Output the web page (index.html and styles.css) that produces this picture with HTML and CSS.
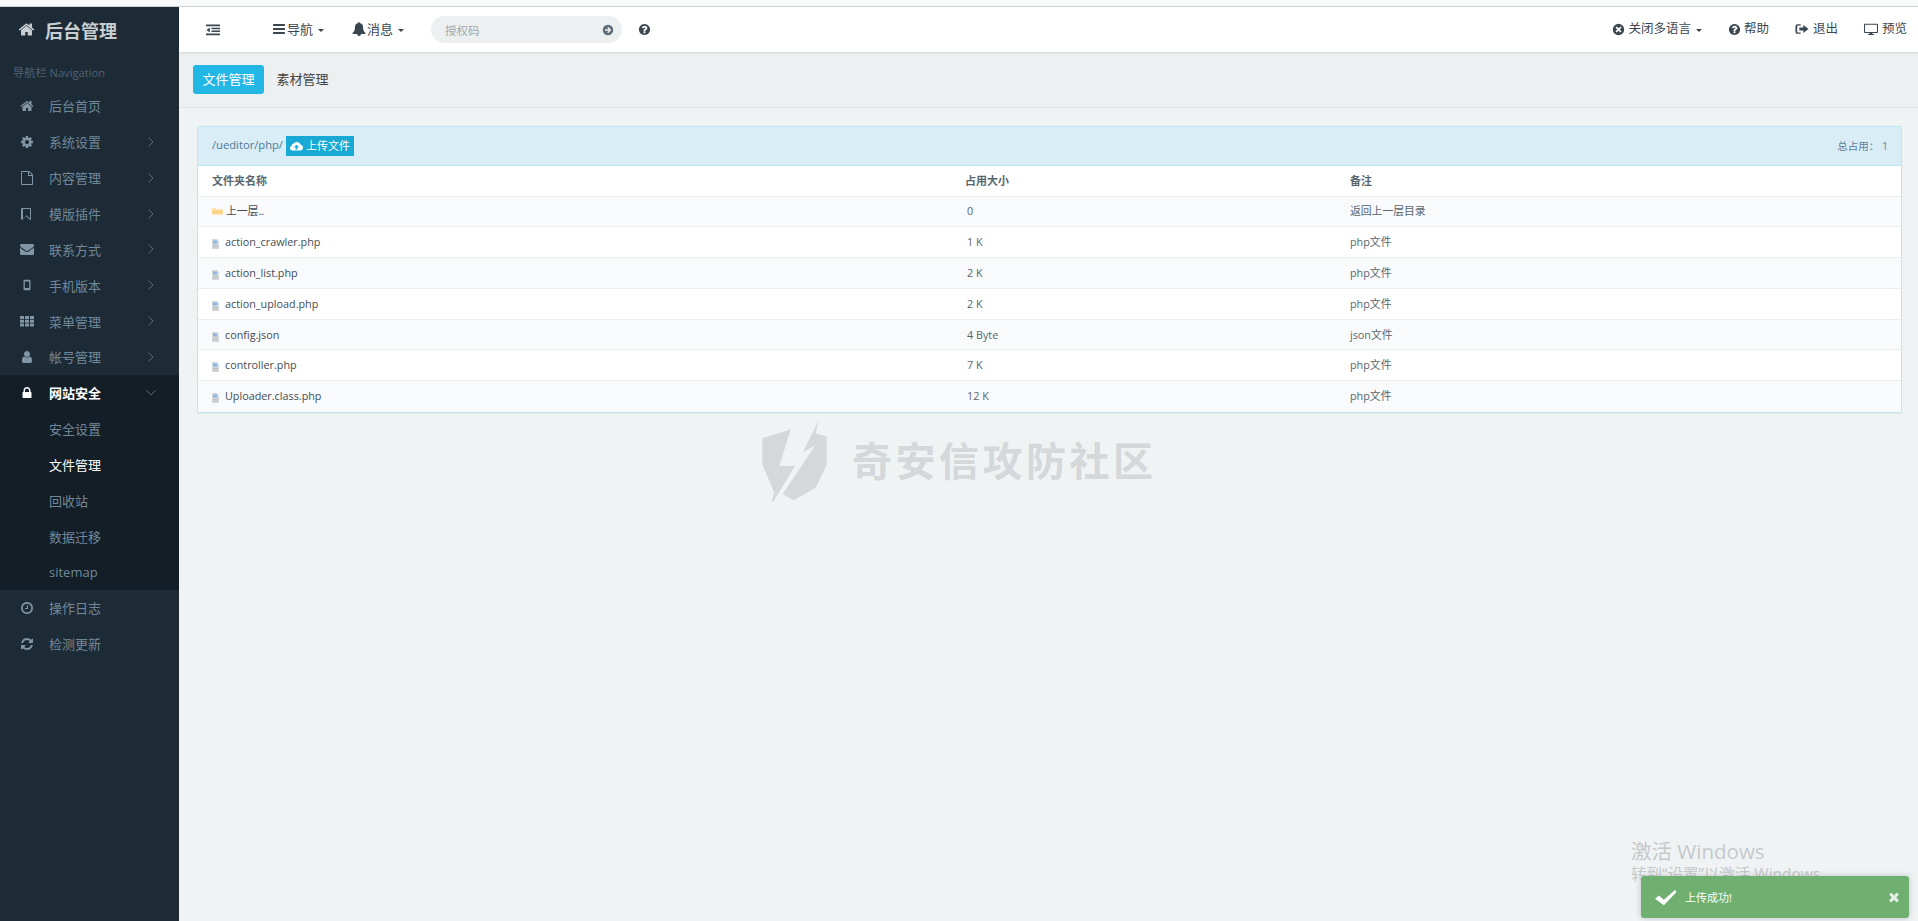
FILE: index.html
```html
<!DOCTYPE html>
<html lang="zh-CN">
<head>
  <meta charset="UTF-8">
  <title>文件管理</title>
  <link rel="stylesheet" href="styles.css">
</head>
<body>
  <svg class="sprite" xmlns="http://www.w3.org/2000/svg">
    <symbol id="i-home" viewBox="0 0 1792 1792"><path d="M1472 992v480q0 26-19 45t-45 19h-384v-384h-256v384h-384q-26 0-45-19t-19-45v-480q0-1 .5-3t.5-3l575-474 575 474q1 2 1 6zm223-69l-62 74q-8 9-21 11h-3q-13 0-21-7l-692-577-692 577q-12 8-24 7-13-2-21-11l-62-74q-8-10-7-23.500t11-21.500l719-599q32-26 76-26t76 26l244 204v-195q0-14 9-23t23-9h192q14 0 23 9t9 23v408l219 182q10 8 11 21.500t-7 23.500z"/></symbol>
    <symbol id="i-cog" viewBox="0 0 1792 1792"><path d="M1152 896q0-106-75-181t-181-75-181 75-75 181 75 181 181 75 181-75 75-181zm512-109v222q0 12-8 23t-20 13l-185 28q-19 54-39 91 35 50 107 138 10 12 10 25t-9 23q-27 37-99 108t-94 71q-12 0-26-9l-138-108q-44 23-91 38-16 136-29 186-7 28-36 28h-222q-14 0-24.500-8.500t-11.500-21.500l-28-184q-49-16-90-37l-141 107q-10 9-25 9-14 0-25-11-126-114-165-168-7-10-7-23 0-12 8-23 15-21 51-66.500t54-70.500q-27-50-41-99l-183-27q-13-2-21-12.500t-8-23.500v-222q0-12 8-23t19-13l186-28q14-46 39-92-40-57-107-138-10-12-10-24 0-10 9-23 26-36 98.500-107.500t94.500-71.500q13 0 26 10l138 107q44-23 91-38 16-136 29-186 7-28 36-28h222q14 0 24.500 8.500t11.500 21.500l28 184q49 16 90 37l142-107q9-9 24-9 13 0 25 10 129 119 165 170 7 8 7 22 0 12-8 23-15 21-51 66.500t-54 70.500q26 50 41 98l183 28q13 2 21 12.500t8 23.500z"/></symbol>
    <symbol id="i-file" viewBox="0 0 1792 1792"><path d="M1596 380q28 28 48 76t20 88v1152q0 40-28 68t-68 28h-1344q-40 0-68-28t-28-68v-1600q0-40 28-68t68-28h896q40 0 88 20t76 48zm-444-244v376h376q-10-29-22-41l-313-313q-12-12-41-22zm384 1528v-1024h-416q-40 0-68-28t-28-68v-416h-768v1536h1280z"/></symbol>
    <symbol id="i-bookmark" viewBox="0 0 1792 1792"><path d="M1280 256h-896v1242l448-430 448 430v-1242zm12-128q23 0 44 9 33 13 52.500 41t19.500 62v1289q0 34-19.500 62t-52.500 41q-19 8-44 8-48 0-83-32l-441-424-441 424q-36 33-83 33-23 0-44-9-33-13-52.500-41t-19.500-62v-1289q0-34 19.500-62t52.500-41q21-9 44-9h1048z"/></symbol>
    <symbol id="i-envelope" viewBox="0 0 1792 1792"><path d="M1792 710v794q0 66-47 113t-113 47h-1472q-66 0-113-47t-47-113v-794q44 49 101 87 362 246 497 345 57 42 92.500 65.500t94.500 48 110 24.500h2q51 0 110-24.500t94.500-48 92.500-65.500q170-123 498-345 57-39 100-87zm0-294q0 79-49 151t-122 123q-376 261-468 325-10 7-42.500 30.500t-54 38-52 32.500-57.500 27-50 9h-2q-23 0-50-9t-57.500-27-52-32.500-54-38-42.500-30.500q-91-64-262-182.500t-205-142.500q-62-42-117-115.500t-55-136.500q0-78 41.500-130t118.500-52h1472q65 0 112.500 47t47.500 113z"/></symbol>
    <symbol id="i-mobile" viewBox="0 0 16 16"><path fill-rule="evenodd" d="M5.500 2h5q1.500 0 1.500 1.500v9q0 1.500-1.500 1.500h-5q-1.500 0-1.500-1.500v-9q0-1.500 1.500-1.500zm0 2v7.500h5v-7.500z"/></symbol>
    <symbol id="i-th" viewBox="0 0 14 14"><path d="M0 2h4v3h-4zM5 2h4v3h-4zM10 2h4v3h-4zM0 5.800h4v3h-4zM5 5.800h4v3h-4zM10 5.800h4v3h-4zM0 9.600h4v3h-4zM5 9.600h4v3h-4zM10 9.600h4v3h-4z"/></symbol>
    <symbol id="i-user" viewBox="0 0 1792 1792"><path d="M1536 1399q0 109-62.500 187t-150.500 78h-854q-88 0-150.500-78t-62.500-187q0-85 8.500-160.500t31.500-152 58.500-131 94-89 134.500-34.500q131 128 313 128t313-128q76 0 134.500 34.500t94 89 58.500 131 31.500 152 8.500 160.500zm-256-887q0 159-112.500 271.500t-271.500 112.500-271.500-112.500-112.500-271.500 112.500-271.500 271.500-112.500 271.500 112.500 112.500 271.500z"/></symbol>
    <symbol id="i-lock" viewBox="0 0 1792 1792"><path d="M640 768h512v-192q0-106-75-181t-181-75-181 75-75 181v192zm832 96v576q0 40-28 68t-68 28h-960q-40 0-68-28t-28-68v-576q0-40 28-68t68-28h32v-192q0-184 132-316t316-132 316 132 132 316v192h32q40 0 68 28t28 68z"/></symbol>
    <symbol id="i-clock" viewBox="0 0 1792 1792"><path d="M1024 544v448q0 14-9 23t-23 9h-320q-14 0-23-9t-9-23v-64q0-14 9-23t23-9h224v-352q0-14 9-23t23-9h64q14 0 23 9t9 23zm416 352q0-148-73-273t-198-198-273-73-273 73-198 198-73 273 73 273 198 198 273 73 273-73 198-198 73-273zm224 0q0 209-103 385.500t-279.500 279.500-385.500 103-385.500-103-279.500-279.500-103-385.500 103-385.500 279.500-279.500 385.500-103 385.500 103 279.500 279.500 103 385.500z"/></symbol>
    <symbol id="i-refresh" viewBox="0 0 1792 1792"><path d="M1639 1056q0 5-1 7-64 268-268 434.500t-478 166.500q-146 0-282.500-55t-243.500-157l-129 129q-19 19-45 19t-45-19-19-45v-448q0-26 19-45t45-19h448q26 0 45 19t19 45-19 45l-137 137q71 66 161 102t187 36q134 0 250-65t186-179q11-17 53-117 8-23 30-23h192q13 0 22.500 9.500t9.500 22.500zm25-800v448q0 26-19 45t-45 19h-448q-26 0-45-19t-19-45 19-45l138-138q-148-137-349-137-134 0-250 65t-186 179q-11 17-53 117-8 23-30 23h-199q-13 0-22.500-9.500t-9.500-22.500v-7q65-268 270-434.500t480-166.500q146 0 284 55.500t245 156.500l130-129q19-19 45-19t45 19 19 45z"/></symbol>
    <symbol id="i-bars" viewBox="0 0 1792 1792"><path d="M1664 1344v128q0 26-19 45t-45 19h-1408q-26 0-45-19t-19-45v-128q0-26 19-45t45-19h1408q26 0 45 19t19 45zm0-512v128q0 26-19 45t-45 19h-1408q-26 0-45-19t-19-45v-128q0-26 19-45t45-19h1408q26 0 45 19t19 45zm0-512v128q0 26-19 45t-45 19h-1408q-26 0-45-19t-19-45v-128q0-26 19-45t45-19h1408q26 0 45 19t19 45z"/></symbol>
    <symbol id="i-bell" viewBox="0 0 1792 1792"><path d="M912 1696q0-16-16-16-59 0-101.500-42.500t-42.500-101.500q0-16-16-16t-16 16q0 73 51.500 124.500t124.500 51.500q16 0 16-16zm816-288q0 52-38 90t-90 38h-448q0 106-75 181t-181 75-181-75-75-181h-448q-52 0-90-38t-38-90q50-42 91-88t85-119.500 74.500-158.500 50-206 19.500-260q0-152 117-282.500t307-158.500q-8-19-8-39 0-40 28-68t68-28 68 28 28 68q0 20-8 39 190 28 307 158.500t117 282.500q0 139 19.500 260t50 206 74.500 158.500 85 119.500 91 88z"/></symbol>
    <symbol id="i-question" viewBox="0 0 1792 1792"><path d="M1024 1376v-192q0-14-9-23t-23-9h-192q-14 0-23 9t-9 23v192q0 14 9 23t23 9h192q14 0 23-9t9-23zm256-672q0-88-55.500-163t-138.500-116-170-41q-243 0-371 213-15 24 8 42l132 100q7 6 19 6 16 0 25-12 53-68 86-92 34-24 86-24 48 0 85.500 26t37.500 59q0 38-20 61t-68 45q-63 28-115.500 86.500t-52.500 125.500v36q0 14 9 23t23 9h192q14 0 23-9t9-23q0-19 21.500-49.500t54.500-49.500q32-18 49-28.500t46-35 44.500-48 28-60.500 12.500-81zm384 192q0 209-103 385.500t-279.500 279.500-385.500 103-385.500-103-279.500-279.500-103-385.500 103-385.500 279.500-279.500 385.500-103 385.500 103 279.500 279.500 103 385.500z"/></symbol>
    <symbol id="i-check" viewBox="0 0 70 52"><path d="M3 30l12-10 15 13 35-31 3 8-38 40z"/></symbol>
    <symbol id="i-times" viewBox="0 0 1792 1792"><path d="M1490 1322q0 40-28 68l-136 136q-28 28-68 28t-68-28l-294-294-294 294q-28 28-68 28t-68-28l-136-136q-28-28-28-68t28-68l294-294-294-294q-28-28-28-68t28-68l136-136q28-28 68-28t68 28l294 294 294-294q28-28 68-28t68 28l136 136q28 28 28 68t-28 68l-294 294 294 294q28 28 28 68z"/></symbol>
    <symbol id="i-arrow-circle" viewBox="0 0 16 16"><path fill-rule="evenodd" d="M8 1a7 7 0 1 1 0 14a7 7 0 0 1 0-14zM8.300 3.800l-1.300 1.300l1.900 1.800h-4.900v2.200h4.900l-1.900 1.800l1.300 1.300l4.200-4.200z"/></symbol>
    <symbol id="i-times-circle" viewBox="0 0 16 16"><path fill-rule="evenodd" d="M8 1a7 7 0 1 1 0 14a7 7 0 0 1 0-14zM5.700 4.300l-1.400 1.400l2.300 2.300l-2.300 2.300l1.400 1.400l2.300-2.300l2.300 2.300l1.400-1.400l-2.300-2.300l2.300-2.300l-1.400-1.400l-2.300 2.300z"/></symbol>
    <symbol id="i-signout" viewBox="0 0 16 16"><path fill-rule="evenodd" d="M3 2.500h3.500v1.500h-3q-1 0-1 1v6q0 1 1 1h3v1.500h-3.500q-2.500 0-2.500-2.500v-6q0-2.500 2.500-2.500zM9.500 3.500l6 4.500l-6 4.500v-2.800h-4.500v-3.400h4.500z"/></symbol>
    <symbol id="i-desktop" viewBox="0 0 16 16"><path fill-rule="evenodd" d="M1 2h14q1 0 1 1v8.500q0 1-1 1h-5.500v1.300h2v1h-7v-1h2v-1.300h-5.500q-1 0-1-1v-8.500q0-1 1-1zm.2 1.200v8.100h13.600v-8.100z"/></symbol>
    <symbol id="i-cloud" viewBox="0 0 18 14"><path fill-rule="evenodd" d="M10 1q3.500 0 4.500 3.300q3.500 .7 3.500 4.200q0 4-4 4h-10.500q-3.500 0-3.500-3.500q0-2.700 2.500-3.500q0-2.500 2.700-2.500q1.500-2.500 4.800-2.500zM9 4.500l-3.700 3.700h2.400v3h2.600v-3h2.400z"/></symbol>
    <symbol id="i-indent" viewBox="0 0 14 14"><path d="M0 1.500h14v1.800h-14zM5.500 4.800h8.500v1.400h-8.500zM5.500 7.600h8.500v1.400h-8.500zM0 10.500h14v1.800h-14zM3.800 4.500v5l-3.300-2.500z"/></symbol>
    <symbol id="i-chevron-r" viewBox="0 0 8 12"><path d="M1.500 1.500l4.500 4.500l-4.500 4.500" fill="none" stroke="currentColor" stroke-width="1"/></symbol>
    <symbol id="i-chevron-d" viewBox="0 0 12 8"><path d="M1.500 1.500l4.500 4.500l4.500-4.500" fill="none" stroke="currentColor" stroke-width="1"/></symbol>
    <symbol id="i-doc" viewBox="0 0 7 10"><path fill="#d5d8db" d="M0 0h5l2 2v8h-7z"/><path fill="#8fb6e0" d="M1 1.500h4v3h-4z"/><path fill="#b4b9bd" d="M1 6h5v.8h-5zM1 7.800h5v.8h-5z"/></symbol>
    <symbol id="i-folder" viewBox="0 0 12 7"><path fill="#fbdc9c" d="M0 0h4l1 1h7v6h-12z"/><path fill="#f6c777" d="M1.500 3h1.500v2h-1.500zM4 3h1.500v2h-1.500zM6.500 3h1.500v2h-1.500zM9 3h1.500v2h-1.500z"/></symbol>
  </svg>

  <div class="top-strip"></div>
  <div class="app">
    <aside class="sidebar">
      <div class="brand">
        <svg class="brand-icon"><use href="#i-home"/></svg>
        <span>后台管理</span>
      </div>
      <div class="nav-label">导航栏 Navigation</div>
      <ul class="nav">
        <li class="nav-item"><svg class="nav-icon"><use href="#i-home"/></svg><span>后台首页</span></li>
        <li class="nav-item"><svg class="nav-icon"><use href="#i-cog"/></svg><span>系统设置</span><svg class="chevron"><use href="#i-chevron-r"/></svg></li>
        <li class="nav-item"><svg class="nav-icon"><use href="#i-file"/></svg><span>内容管理</span><svg class="chevron"><use href="#i-chevron-r"/></svg></li>
        <li class="nav-item"><svg class="nav-icon"><use href="#i-bookmark"/></svg><span>模版插件</span><svg class="chevron"><use href="#i-chevron-r"/></svg></li>
        <li class="nav-item"><svg class="nav-icon"><use href="#i-envelope"/></svg><span>联系方式</span><svg class="chevron"><use href="#i-chevron-r"/></svg></li>
        <li class="nav-item"><svg class="nav-icon"><use href="#i-mobile"/></svg><span>手机版本</span><svg class="chevron"><use href="#i-chevron-r"/></svg></li>
        <li class="nav-item"><svg class="nav-icon"><use href="#i-th"/></svg><span>菜单管理</span><svg class="chevron"><use href="#i-chevron-r"/></svg></li>
        <li class="nav-item"><svg class="nav-icon"><use href="#i-user"/></svg><span>帐号管理</span><svg class="chevron"><use href="#i-chevron-r"/></svg></li>
        <li class="nav-group">
          <div class="nav-item open"><svg class="nav-icon"><use href="#i-lock"/></svg><span>网站安全</span><svg class="chevron-down"><use href="#i-chevron-d"/></svg></div>
          <div class="nav-item sub">安全设置</div>
          <div class="nav-item sub current">文件管理</div>
          <div class="nav-item sub">回收站</div>
          <div class="nav-item sub">数据迁移</div>
          <div class="nav-item sub">sitemap</div>
        </li>
        <li class="nav-item"><svg class="nav-icon"><use href="#i-clock"/></svg><span>操作日志</span></li>
        <li class="nav-item"><svg class="nav-icon"><use href="#i-refresh"/></svg><span>检测更新</span></li>
      </ul>
    </aside>

    <div class="main">
      <header class="topbar">
        <svg class="toggle-icon"><use href="#i-indent"/></svg>
        <div class="top-link nav-menu"><svg class="top-icon"><use href="#i-bars"/></svg>导航<i class="caret"></i></div>
        <div class="top-link msg-menu"><svg class="top-icon"><use href="#i-bell"/></svg>消息<i class="caret"></i></div>
        <div class="search">
          <span>授权码</span>
          <svg class="search-go"><use href="#i-arrow-circle"/></svg>
        </div>
        <svg class="help-icon"><use href="#i-question"/></svg>
        <div class="top-right">
          <div class="top-link lang"><svg class="top-icon round"><use href="#i-times-circle"/></svg>关闭多语言<i class="caret"></i></div>
          <div class="top-link"><svg class="top-icon round"><use href="#i-question"/></svg>帮助</div>
          <div class="top-link"><svg class="top-icon"><use href="#i-signout"/></svg>退出</div>
          <div class="top-link"><svg class="top-icon"><use href="#i-desktop"/></svg>预览</div>
        </div>
      </header>

      <div class="tabs">
        <a class="tab active">文件管理</a>
        <a class="tab">素材管理</a>
      </div>

      <div class="content">
        <div class="panel">
          <div class="panel-head">
            <div class="path">
              <span>/ueditor/php/</span>
              <a class="upload"><svg class="upload-icon"><use href="#i-cloud"/></svg>上传文件</a>
            </div>
            <div class="usage">总占用：&nbsp;1</div>
          </div>
          <table class="files">
            <colgroup><col class="col-name"><col class="col-size"><col></colgroup>
            <thead>
              <tr><th>文件夹名称</th><th>占用大小</th><th>备注</th></tr>
            </thead>
            <tbody>
              <tr><td class="up"><svg class="folder-icon"><use href="#i-folder"/></svg>上一层..</td><td class="size">0</td><td>返回上一层目录</td></tr>
              <tr><td><svg class="doc-icon"><use href="#i-doc"/></svg>action_crawler.php</td><td class="size">1 K</td><td>php文件</td></tr>
              <tr><td><svg class="doc-icon"><use href="#i-doc"/></svg>action_list.php</td><td class="size">2 K</td><td>php文件</td></tr>
              <tr><td><svg class="doc-icon"><use href="#i-doc"/></svg>action_upload.php</td><td class="size">2 K</td><td>php文件</td></tr>
              <tr><td><svg class="doc-icon"><use href="#i-doc"/></svg>config.json</td><td class="size">4 Byte</td><td>json文件</td></tr>
              <tr><td><svg class="doc-icon"><use href="#i-doc"/></svg>controller.php</td><td class="size">7 K</td><td>php文件</td></tr>
              <tr><td><svg class="doc-icon"><use href="#i-doc"/></svg>Uploader.class.php</td><td class="size">12 K</td><td>php文件</td></tr>
            </tbody>
          </table>
        </div>
      </div>
    </div>
  </div>

  <!-- things lying over the page -->
  <div class="watermark">
    <svg class="wm-shield" viewBox="50 40 225 280"><path d="M60 108l90-28-36 116h50l-69 114-5-2 8-28-38-90zM240 50l-10 42 35 10v90l-35 73-70 40-35-20 104-155-40 22z"/></svg>
    <span>奇安信攻防社区</span>
  </div>
  <div class="activate">
    <div class="activate-title">激活 Windows</div>
    <div class="activate-sub">转到“设置”以激活 Windows。</div>
  </div>
  <div class="toast">
    <svg class="toast-check"><use href="#i-check"/></svg>
    <span>上传成功!</span>
    <svg class="toast-close"><use href="#i-times"/></svg>
  </div>
</body>
</html>
```

FILE: styles.css
```css
* {
  box-sizing: border-box;
}

html,
body {
  height: 100%;
}

body {
  margin: 0;
  overflow: hidden;
  background: #eff3f4;
  color: #58666e;
  font-family: "Open Sans", "Noto Sans CJK SC", sans-serif;
  font-size: 12px;
  display: flex;
  flex-direction: column;
}

.sprite {
  display: none;
}

svg {
  fill: currentColor;
  flex: none;
}

.top-strip {
  height: 7px;
  background: #f8f9fb;
  border-bottom: 1px solid #cfd1d3;
}

.app {
  flex: 1;
  display: flex;
  min-height: 0;
}

/* sidebar */
.sidebar {
  width: 179px;
  background: #1c2b36;
  color: #71889b;
  font-size: 13px;
}

.brand {
  height: 45px;
  display: flex;
  align-items: center;
  padding-left: 18px;
  color: #c9ced1;
  font-size: 18px;
  font-weight: 700;
}

.brand-icon {
  width: 17px;
  height: 17px;
  margin-right: 10px;
}

.nav-label {
  height: 36px;
  padding: 12px 0 0 13px;
  font-size: 11.200px;
  line-height: 17px;
  color: #4f6272;
}

.nav {
  list-style: none;
  margin: 0;
  padding: 0;
}

.nav-item {
  height: 35.870px;
  display: flex;
  align-items: center;
  padding-left: 20px;
  position: relative;
}

.nav-icon {
  width: 14px;
  height: 14px;
  margin-right: 15px;
  color: #8195a5;
}

.chevron,
.chevron-down {
  position: absolute;
  color: #566a7a;
}

.chevron {
  left: 147px;
  width: 8px;
  height: 12px;
}

.chevron-down {
  left: 145px;
  width: 12px;
  height: 8px;
}

.nav-group {
  background: #131e27;
}

.nav-item.open {
  color: #fff;
  font-weight: 700;
}

.nav-item.open .nav-icon {
  color: #fff;
}

.nav-item.sub {
  padding-left: 49px;
}

.nav-item.current {
  color: #fff;
}

/* top bar */
.main {
  flex: 1;
  min-width: 0;
  display: flex;
  flex-direction: column;
}

.topbar {
  height: 45px;
  background: #fff;
  box-shadow: 0 1px 2px rgba(0, 0, 0, 0.12);
  display: flex;
  align-items: center;
  padding-left: 27px;
  color: #3a4750;
  font-size: 13px;
  position: relative;
}

.toggle-icon {
  width: 14px;
  height: 14px;
  margin-right: 52px;
}

.top-link {
  display: flex;
  align-items: center;
  line-height: 16px;
  padding-bottom: 1px;
}

.top-icon {
  width: 14px;
  height: 14px;
  margin-right: 1px;
}

.top-icon.round {
  width: 13px;
  height: 13px;
  margin-right: 3px;
}

.caret {
  width: 0;
  height: 0;
  margin-left: 5px;
  margin-top: 2px;
  border-left: 3px solid transparent;
  border-right: 3px solid transparent;
  border-top: 3px solid #3a4750;
}

.nav-menu {
  margin-right: 28px;
}

.search {
  width: 191px;
  height: 27px;
  margin-left: 27px;
  padding: 0 8px 0 14px;
  border-radius: 14px;
  background: #edf0f1;
  display: flex;
  align-items: center;
  justify-content: space-between;
  color: #a0aaa8;
  font-size: 11.5px;
}

.search-go {
  width: 12px;
  height: 12px;
  color: #5b6b7a;
}

.help-icon {
  width: 13px;
  height: 13px;
  margin-left: 16px;
}

.top-right {
  margin-left: auto;
  padding-right: 11px;
  display: flex;
  align-items: center;
  gap: 26px;
  font-size: 12.500px;
}

.top-right .top-icon {
  margin-right: 4px;
}

.top-right .top-icon.round {
  margin-right: 3px;
}

/* tabs */
.tabs {
  height: 56px;
  padding: 13px 14px 0;
  background: #ecf0f1;
  border-bottom: 1px solid #e0e4e6;
  display: flex;
  align-items: flex-start;
  gap: 3px;
}

.tab {
  height: 29px;
  padding: 0 9.500px;
  border-radius: 3px;
  color: #444;
  font-size: 13px;
  line-height: 28px;
}

.tab.active {
  background: #23b7e5;
  color: #fff;
}

/* file panel */
.content {
  padding: 18px 16px 0 18px;
}

.panel {
  background: #fff;
  border: 1px solid #bce8f1;
  border-radius: 2px;
  box-shadow: 0 1px 1px rgba(0, 0, 0, 0.05);
}

.panel-head {
  height: 39px;
  padding: 0 14px;
  background: #d9edf7;
  border-bottom: 1px solid #bce8f1;
  display: flex;
  align-items: center;
  justify-content: space-between;
  color: #4e7a99;
}

.path {
  display: flex;
  align-items: center;
  gap: 3px;
  font-size: 11.200px;
  line-height: 16px;
}

.path span {
  margin-top: -2px;
}

.upload {
  height: 20px;
  padding: 0 4px;
  background: #19a9d5;
  color: #fff;
  font-size: 11px;
  line-height: 20px;
  display: flex;
  align-items: center;
}

.upload-icon {
  width: 13px;
  height: 11px;
  margin-right: 3px;
}

.usage {
  font-size: 10.500px;
  color: #5a8199;
  margin-top: -2px;
  margin-right: -1px;
}

.files {
  width: 100%;
  border-collapse: collapse;
  table-layout: fixed;
}

.col-name {
  width: 753px;
}

.col-size {
  width: 385px;
}

.files th {
  height: 30px;
  padding: 0 14px 2px;
  text-align: left;
  font-size: 11px;
  font-weight: 700;
}

.files td {
  height: 30.800px;
  padding: 0 14px 1px;
  border-top: 1px solid #eaeff0;
  font-size: 10.800px;
  line-height: 15px;
  color: #58666e;
}

.files td:first-child {
  color: #3f4c54;
}

.files tbody tr:nth-child(odd) {
  background: #f9fafc;
}

.files td.size {
  padding-left: 16px;
}

.doc-icon {
  width: 7px;
  height: 10px;
  margin-right: 6px;
  vertical-align: -3px;
}

.folder-icon {
  width: 11px;
  height: 7px;
  margin-right: 3px;
}

/* overlays */
.watermark {
  position: absolute;
  left: 759px;
  top: 417px;
  display: flex;
  align-items: center;
  gap: 22px;
  color: #d4d8da;
  font-size: 40px;
  font-weight: 700;
  font-family: "Noto Sans CJK SC", sans-serif;
  letter-spacing: 3.500px;
}

.watermark span {
  margin-top: -5px;
}

.wm-shield {
  width: 71px;
  height: 88px;
}

.activate {
  position: absolute;
  left: 1631px;
  top: 838px;
  color: #c6c9cb;
}

.activate-title {
  font-size: 20.500px;
  line-height: 26px;
}

.activate-sub {
  font-size: 15.500px;
  line-height: 20px;
}

.toast {
  position: absolute;
  left: 1641px;
  top: 876px;
  width: 268px;
  height: 42px;
  padding: 0 8px 0 13px;
  border-radius: 3px;
  background: #6fb070;
  box-shadow: 0 0 6px rgba(0, 0, 0, 0.2);
  color: #fff;
  font-size: 11px;
  display: flex;
  align-items: center;
}

.toast-check {
  width: 23px;
  height: 17px;
  margin-right: 8px;
}

.toast-close {
  width: 14px;
  height: 14px;
  margin-left: auto;
  color: #e6efe6;
}
```
